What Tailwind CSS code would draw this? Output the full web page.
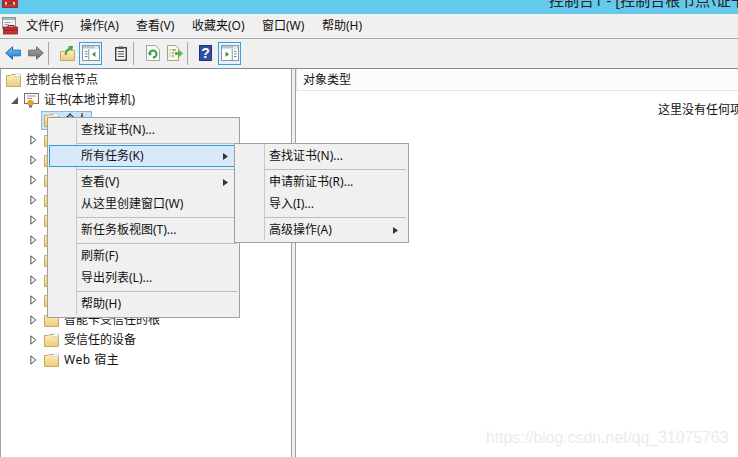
<!DOCTYPE html>
<html lang="zh">
<head>
<meta charset="UTF-8">
<title>控制台1</title>
<script src="https://cdn.jsdelivr.net/npm/@tailwindcss/browser@4"></script>
</head>
<body class="relative w-[738px] h-[457px] overflow-hidden bg-white text-[12px] text-[#111] font-['Noto_Sans','Noto_Sans_CJK_SC',sans-serif]">

<svg class="absolute w-0 h-0">
  <defs>
    <linearGradient id="fold" x1="0" y1="0" x2="0" y2="1"><stop offset="0" stop-color="#fdf0bd"/><stop offset="1" stop-color="#eccb78"/></linearGradient>
    <linearGradient id="blue" x1="0" y1="0" x2="0" y2="1"><stop offset="0" stop-color="#7cc8f5"/><stop offset="1" stop-color="#1f78d0"/></linearGradient>
    <linearGradient id="grey" x1="0" y1="0" x2="0" y2="1"><stop offset="0" stop-color="#a8a8a8"/><stop offset="1" stop-color="#6e6e6e"/></linearGradient>
    <symbol id="folder" viewBox="0 0 15 14">
      <path d="M.5 2.500h4l1-1h9v12H.5z" fill="url(#fold)" stroke="#c8a860"/>
      <path d="M9.500 1h5v2.500H8.500z" fill="#fff" stroke="#b9c4cc" stroke-width=".6"/>
    </symbol>
    <symbol id="expander" viewBox="0 0 8 11">
      <path d="M1 .8 6.600 5.500 1 10.200z" fill="#fff" stroke="#333" stroke-width="1"/>
    </symbol>
    <symbol id="toolbox" viewBox="0 0 16 11">
      <path d="M5 3V1h6v2" fill="none" stroke="#8c2020" stroke-width="1.200"/>
      <rect x=".5" y="3" width="15" height="7.500" fill="#c8323a" stroke="#8c2020" stroke-width=".8"/>
      <rect x="1" y="5.500" width="14" height="1" fill="#7c1a1f"/>
      <rect x="3" y="5" width="2" height="2.500" fill="#f0d7a0"/><rect x="11" y="5" width="2" height="2.500" fill="#f0d7a0"/>
    </symbol>
    <symbol id="pane" viewBox="0 0 20 18">
      <rect x=".5" y=".5" width="19" height="17" fill="#fff" stroke="#7a8a96"/>
      <rect x="1" y="1" width="18" height="3" fill="#b9c6d1"/>
      <rect x="14" y="1.500" width="4" height="1.500" fill="#fff"/>
    </symbol>
  </defs>
</svg>

<!-- 标题栏 -->
<div class="h-[14px] overflow-hidden bg-[#65c9ec] flex">
  <svg class="w-4 h-[11px] ml-[2px] -mt-[3px] shrink-0"><use href="#toolbox"/></svg>
  <div class="ml-[531px] -mt-[10px] text-[15px] leading-[20px] whitespace-nowrap text-[#222]">控制台1 - [控制台根节点\证书</div>
</div>

<!-- 菜单栏 -->
<div class="relative h-[25px] bg-[#f0f0f0] border-b border-[#a9a9a9]">
  <svg class="absolute left-[2px] top-[3px] w-4 h-[18px]" viewBox="0 0 16 18">
    <rect x=".5" y=".5" width="13" height="11" fill="#eef1f4" stroke="#8d949b"/>
    <rect x="1" y="1" width="12" height="2" fill="#aab4bd"/>
    <path d="M2.500 5.500h6M2.500 7.500h4" stroke="#9aa3aa"/>
    <path d="M6 10V8.500h6V10" fill="none" stroke="#8c2020"/>
    <rect x="1.500" y="10" width="14" height="7" fill="#c8323a" stroke="#8c2020" stroke-width=".8"/>
    <rect x="2" y="12.500" width="13" height="1" fill="#7c1a1f"/>
  </svg>
  <div class="flex h-full items-center pl-[26px] pb-[1px] whitespace-nowrap">
    <span class="w-[54px]">文件(F)</span>
    <span class="w-[56px]">操作(A)</span>
    <span class="w-[56px]">查看(V)</span>
    <span class="w-[70px]">收藏夹(O)</span>
    <span class="w-[60px]">窗口(W)</span>
    <span>帮助(H)</span>
  </div>
</div>

<!-- 工具栏 -->
<div class="h-[30px] bg-[#f0f0f0] border-b border-[#808a90] flex items-center pl-[5px] pb-[1px]">
  <svg class="w-4 h-[14px] shrink-0" viewBox="0 0 16 14"><path d="M7.500.8.700 7l6.800 6.200V9.800h7.800V4.200H7.500z" fill="url(#blue)" stroke="#1f6fb8"/></svg>
  <svg class="w-4 h-[14px] ml-[7px] shrink-0" viewBox="0 0 16 14"><path d="M8.500.8 15.300 7l-6.800 6.200V9.800H.7V4.200h7.800z" fill="url(#grey)" stroke="#666"/></svg>
  <div class="w-px h-[23px] bg-[#a8a8a8] ml-[4px]"></div>
  <svg class="w-[15px] h-4 ml-[11px] shrink-0" viewBox="0 0 15 16">
    <path d="M.5 6.500h4l1-1h9v10H.5z" fill="url(#fold)" stroke="#c8a860"/>
    <path d="M4.500 9.500C5 5.500 7 3.500 9 3L7.800 1.200 13 .8l-.8 5-1.500-1.600C8.500 5 7 7 6.500 10z" fill="#3fa548"/>
  </svg>
  <div class="w-[23px] h-[23px] ml-[4px] border border-[#3a9fdc] bg-[#e6f2fb] flex items-center justify-center shrink-0">
    <svg class="w-[18px] h-4" viewBox="0 0 20 18"><use href="#pane"/><path d="M7.500 4.500v13" stroke="#7a8a96"/><path d="M3 7h3M3 10h3M3 13h3" stroke="#3a78b8"/><path d="M15 7.500v6l-4-3z" fill="#2e9b45"/></svg>
  </div>
  <svg class="w-3 h-[15px] ml-[13px] shrink-0" viewBox="0 0 12 15">
    <rect x=".7" y="1.700" width="10.600" height="12.600" fill="#f4f4f4" stroke="#333" stroke-width="1.300"/>
    <rect x="3.500" y=".5" width="5" height="2.500" fill="#555"/>
    <path d="M3 5.500h6M3 8h6M3 10.500h6" stroke="#555"/>
  </svg>
  <div class="w-px h-[23px] bg-[#a8a8a8] ml-[6px]"></div>
  <svg class="w-[14px] h-4 ml-[12px] shrink-0" viewBox="0 0 14 16">
    <path d="M.5.500h9l4 4v11H.5z" fill="#fbfbf6" stroke="#a5a5a0"/>
    <path d="M3.500 9a3.500 3.500 0 1 1 3.500 3.500" fill="none" stroke="#2d9e48" stroke-width="2"/>
    <path d="M2 8h4l-2 3z" fill="#2d9e48"/>
  </svg>
  <svg class="w-4 h-4 ml-[7px] shrink-0" viewBox="0 0 16 16">
    <path d="M.5.500h8l3 3v12H.5z" fill="#fbf6df" stroke="#a5a090"/>
    <path d="M2.500 5h1M2.500 8h1M2.500 11h1M5 5h4M5 8h2M5 11h2" stroke="#6a6a60"/>
    <path d="M8 7h3.500V4.500L16 8.500l-4.500 4V10H8z" fill="#56b948"/>
  </svg>
  <div class="w-px h-[23px] bg-[#a8a8a8] ml-[4px]"></div>
  <div class="w-[13px] h-4 ml-[11px] bg-[#2f4fa3] border border-[#1f3577] text-white text-[14px] font-bold leading-[14px] text-center shrink-0 font-['Liberation_Sans',sans-serif]">?</div>
  <div class="w-[23px] h-[23px] ml-[6px] border border-[#3a9fdc] bg-[#e6f2fb] flex items-center justify-center shrink-0">
    <svg class="w-[18px] h-4" viewBox="0 0 20 18"><use href="#pane"/><path d="M12.500 4.500v13" stroke="#7a8a96"/><path d="M14.500 7h3M14.500 10h3M14.500 13h3" stroke="#3a78b8"/><path d="M5 7.500v6l4-3z" fill="#2e9b45"/></svg>
  </div>
</div>

<!-- 主体 -->
<div class="h-[388px] flex bg-[#f0f0f0]">
  <!-- 左侧树 -->
  <div class="w-[292px] bg-white border-l border-r border-[#a0a0a0] pt-px">
    <div class="h-[20px] flex items-center pl-[5px] gap-[5px]">
      <svg class="w-[15px] h-[14px]"><use href="#folder"/></svg><span>控制台根节点</span>
    </div>
    <div class="h-[20px] flex items-center pl-[10px]">
      <svg class="w-[7px] h-[7px]" viewBox="0 0 7 7"><path d="M7 0v7H0z" fill="#555"/></svg>
      <svg class="w-[15px] h-4 ml-[6px]" viewBox="0 0 15 16">
        <rect x=".5" y="1.500" width="14" height="10" fill="#fafafa" stroke="#77706a"/>
        <path d="M3 4h9M3 6.500h5" stroke="#b09a7a"/>
        <path d="M5 13v3l1.500-1 1.500 1v-3" fill="#2f7cc8"/>
        <circle cx="6.500" cy="11" r="2.800" fill="#eda32e" stroke="#bf7d14" stroke-width=".6"/>
      </svg>
      <span class="ml-[5px]">证书(本地计算机)</span>
    </div>
    <div class="h-[20px] flex items-center pl-[40px]">
      <div class="w-[51px] h-[19px] bg-[#cce4f7] border border-[#8fb5dd] flex items-center pl-[2px]">
        <svg class="w-[15px] h-[14px]"><use href="#folder"/></svg><span class="ml-[5px]">个人</span>
      </div>
    </div>
    <div class="h-[20px] flex items-center pl-[29px] gap-[7px]"><svg class="w-[7px] h-[10px]"><use href="#expander"/></svg><svg class="w-[15px] h-[14px]"><use href="#folder"/></svg><span class="ml-[-2px]">受信任的根证书颁发机构</span></div>
    <div class="h-[20px] flex items-center pl-[29px] gap-[7px]"><svg class="w-[7px] h-[10px]"><use href="#expander"/></svg><svg class="w-[15px] h-[14px]"><use href="#folder"/></svg><span class="ml-[-2px]">企业信任</span></div>
    <div class="h-[20px] flex items-center pl-[29px] gap-[7px]"><svg class="w-[7px] h-[10px]"><use href="#expander"/></svg><svg class="w-[15px] h-[14px]"><use href="#folder"/></svg><span class="ml-[-2px]">中间证书颁发机构</span></div>
    <div class="h-[20px] flex items-center pl-[29px] gap-[7px]"><svg class="w-[7px] h-[10px]"><use href="#expander"/></svg><svg class="w-[15px] h-[14px]"><use href="#folder"/></svg><span class="ml-[-2px]">受信任的发布者</span></div>
    <div class="h-[20px] flex items-center pl-[29px] gap-[7px]"><svg class="w-[7px] h-[10px]"><use href="#expander"/></svg><svg class="w-[15px] h-[14px]"><use href="#folder"/></svg><span class="ml-[-2px]">不信任的证书</span></div>
    <div class="h-[20px] flex items-center pl-[29px] gap-[7px]"><svg class="w-[7px] h-[10px]"><use href="#expander"/></svg><svg class="w-[15px] h-[14px]"><use href="#folder"/></svg><span class="ml-[-2px]">第三方根证书颁发机构</span></div>
    <div class="h-[20px] flex items-center pl-[29px] gap-[7px]"><svg class="w-[7px] h-[10px]"><use href="#expander"/></svg><svg class="w-[15px] h-[14px]"><use href="#folder"/></svg><span class="ml-[-2px]">受信任人</span></div>
    <div class="h-[20px] flex items-center pl-[29px] gap-[7px]"><svg class="w-[7px] h-[10px]"><use href="#expander"/></svg><svg class="w-[15px] h-[14px]"><use href="#folder"/></svg><span class="ml-[-2px]">客户端身份验证颁发者</span></div>
    <div class="h-[20px] flex items-center pl-[29px] gap-[7px]"><svg class="w-[7px] h-[10px]"><use href="#expander"/></svg><svg class="w-[15px] h-[14px]"><use href="#folder"/></svg><span class="ml-[-2px]">预览版生成根</span></div>
    <div class="h-[20px] flex items-center pl-[29px] gap-[7px]"><svg class="w-[7px] h-[10px]"><use href="#expander"/></svg><svg class="w-[15px] h-[14px]"><use href="#folder"/></svg><span class="ml-[-2px]">智能卡受信任的根</span></div>
    <div class="h-[20px] flex items-center pl-[29px] gap-[7px]"><svg class="w-[7px] h-[10px]"><use href="#expander"/></svg><svg class="w-[15px] h-[14px]"><use href="#folder"/></svg><span class="ml-[-2px]">受信任的设备</span></div>
    <div class="h-[20px] flex items-center pl-[29px] gap-[7px]"><svg class="w-[7px] h-[10px]"><use href="#expander"/></svg><svg class="w-[15px] h-[14px]"><use href="#folder"/></svg><span class="ml-[-2px] tracking-[0.5px]">Web 宿主</span></div>
  </div>

  <!-- 右侧列表 -->
  <div class="flex-1 ml-[3px] bg-white border-l border-[#a0a0a0] overflow-hidden">
    <div class="h-[22px] bg-[#fcfcfc] border-b border-l border-[#e5e5e5] flex items-center pl-[6px]">对象类型</div>
    <div class="pl-[362px] pt-[10px] whitespace-nowrap">这里没有任何项目</div>
  </div>
</div>

<!-- 右键菜单 -->
<div class="absolute left-[47px] top-[117px] w-[193px] h-[201px] bg-[#f0f0f0] border border-[#a0a0a0] pt-px">
  <div class="absolute left-[28px] top-px bottom-[2px] w-px bg-[#c8c8c8]"></div>
  <div class="h-[22px] flex items-center pl-[33px]">查找证书(N)...</div>
  <div class="h-[4px] flex items-center pl-[29px] pr-[2px]"><div class="w-full h-px bg-[#bdbdbd]"></div></div>
  <div class="relative h-[22px] ml-px flex items-center justify-between pl-[31px] pr-[10px] bg-[#d9e9fb] border border-[#2a9fd6]">
    <span>所有任务(K)</span>
    <svg class="w-[5px] h-[7px]" viewBox="0 0 5 7"><path d="M0 0l5 3.500L0 7z" fill="#333"/></svg>
  </div>
  <div class="h-[4px] flex items-center pl-[29px] pr-[2px]"><div class="w-full h-px bg-[#bdbdbd]"></div></div>
  <div class="h-[22px] flex items-center pl-[33px] pr-[11px] justify-between">
    <span>查看(V)</span>
    <svg class="w-[5px] h-[7px]" viewBox="0 0 5 7"><path d="M0 0l5 3.500L0 7z" fill="#333"/></svg>
  </div>
  <div class="h-[22px] flex items-center pl-[33px]">从这里创建窗口(W)</div>
  <div class="h-[4px] flex items-center pl-[29px] pr-[2px]"><div class="w-full h-px bg-[#bdbdbd]"></div></div>
  <div class="h-[22px] flex items-center pl-[33px]">新任务板视图(T)...</div>
  <div class="h-[4px] flex items-center pl-[29px] pr-[2px]"><div class="w-full h-px bg-[#bdbdbd]"></div></div>
  <div class="h-[22px] flex items-center pl-[33px]">刷新(F)</div>
  <div class="h-[22px] flex items-center pl-[33px]">导出列表(L)...</div>
  <div class="h-[4px] flex items-center pl-[29px] pr-[2px]"><div class="w-full h-px bg-[#bdbdbd]"></div></div>
  <div class="h-[22px] flex items-center pl-[33px]">帮助(H)</div>
</div>

<!-- 子菜单 -->
<div class="absolute left-[234px] top-[143px] w-[175px] h-[100px] bg-[#f0f0f0] border border-[#a0a0a0] pt-px">
  <div class="absolute left-[29px] top-0 bottom-[2px] w-px bg-[#c8c8c8]"></div>
  <div class="h-[22px] flex items-center pl-[34px]">查找证书(N)...</div>
  <div class="h-[4px] flex items-center pl-[30px] pr-[2px]"><div class="w-full h-px bg-[#bdbdbd]"></div></div>
  <div class="h-[22px] flex items-center pl-[34px]">申请新证书(R)...</div>
  <div class="h-[22px] flex items-center pl-[34px]">导入(I)...</div>
  <div class="h-[4px] flex items-center pl-[30px] pr-[2px]"><div class="w-full h-px bg-[#bdbdbd]"></div></div>
  <div class="h-[22px] flex items-center pl-[34px] pr-[10px] justify-between">
    <span>高级操作(A)</span>
    <svg class="w-[5px] h-[7px]" viewBox="0 0 5 7"><path d="M0 0l5 3.500L0 7z" fill="#333"/></svg>
  </div>
</div>

<!-- 水印 -->
<div class="absolute left-[486px] top-[429px] text-[15.800px] leading-[18px] text-[#ebebeb] whitespace-nowrap font-['Liberation_Sans',sans-serif]">https://blog.csdn.net/qq_31075763</div>
</body>
</html>
